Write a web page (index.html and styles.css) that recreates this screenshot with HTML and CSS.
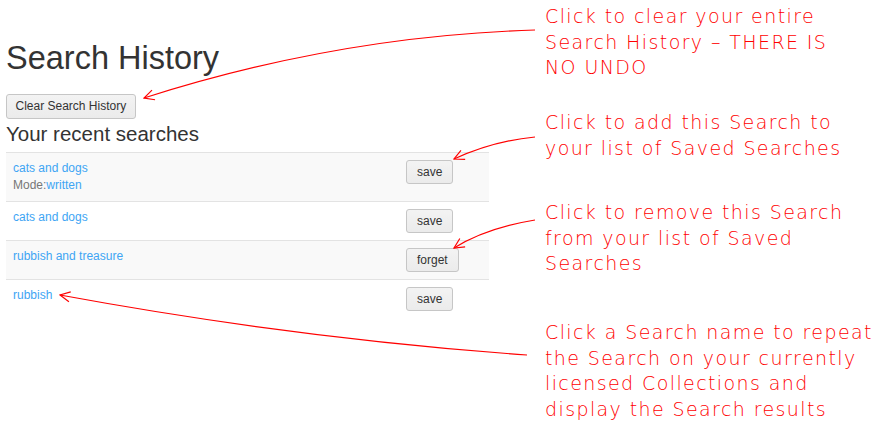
FILE: index.html
```html
<!DOCTYPE html>
<html>
<head>
<meta charset="utf-8">
<title>Search History</title>
<link rel="stylesheet" href="styles.css">
</head>
<body>
<div class="page">
  <main class="content">
    <h1 class="title">Search History</h1>
    <button class="btn btn-clear" type="button">Clear Search History</button>
    <h2 class="subtitle">Your recent searches</h2>
    <table class="history">
      <tbody>
        <tr class="striped">
          <td class="query">
            <a class="link" href="#">cats and dogs</a>
            <div class="mode">Mode:<a class="link" href="#">written</a></div>
          </td>
          <td class="action"><button class="btn" type="button">save</button></td>
        </tr>
        <tr>
          <td class="query"><a class="link" href="#">cats and dogs</a></td>
          <td class="action"><button class="btn" type="button">save</button></td>
        </tr>
        <tr class="striped">
          <td class="query"><a class="link" href="#">rubbish and treasure</a></td>
          <td class="action"><button class="btn" type="button">forget</button></td>
        </tr>
        <tr>
          <td class="query"><a class="link" href="#">rubbish</a></td>
          <td class="action"><button class="btn" type="button">save</button></td>
        </tr>
      </tbody>
    </table>
  </main>

  <p class="note note-clear">Click to clear your entire<br>Search History &ndash; THERE IS<br>NO UNDO</p>
  <p class="note note-save">Click to add this Search to<br>your list of Saved Searches</p>
  <p class="note note-forget">Click to remove this Search<br>from your list of Saved<br>Searches</p>
  <p class="note note-repeat">Click a Search name to repeat<br>the Search on your currently<br>licensed Collections and<br>display the Search results</p>

  <svg class="arrows" width="878" height="429" viewBox="0 0 878 429" aria-hidden="true">
    <defs>
      <marker id="head" viewBox="0 0 12 12" refX="11" refY="6" markerWidth="12" markerHeight="12" markerUnits="userSpaceOnUse" orient="auto">
        <path d="M1,1 L11,6 L1,11" fill="none" stroke="#f00" stroke-width="1.2"/>
      </marker>
    </defs>
    <path d="M535,30 Q338,36 144,98" marker-end="url(#head)"/>
    <path d="M535,137 Q493,141 454,159" marker-end="url(#head)"/>
    <path d="M535,220 Q486,228 454,248" marker-end="url(#head)"/>
    <path d="M527,355 Q293,338 60,295" marker-end="url(#head)"/>
  </svg>
</div>
</body>
</html>
```

FILE: styles.css
```css
* { box-sizing: border-box; }

html, body {
  margin: 0;
  padding: 0;
  background: #fff;
}

body {
  font-family: "Liberation Sans", Arial, sans-serif;
  color: #333;
  font-size: 12px;
}

.page {
  position: relative;
  width: 878px;
  height: 429px;
  overflow: hidden;
}

.content {
  padding: 41px 0 0 6px;
  width: 489px;
  display: flex;
  flex-direction: column;
  align-items: flex-start;
}

.title {
  margin: 0 0 18px;
  font-size: 32.5px;
  font-weight: normal;
  line-height: 35px;
  color: #333;
}

.subtitle {
  margin: 4px 0 7px;
  font-size: 20.5px;
  font-weight: normal;
  line-height: 22px;
  color: #333;
}

.btn {
  font-family: "Liberation Sans", Arial, sans-serif;
  font-size: 12px;
  line-height: 15px;
  height: 24px;
  padding: 4px 10px;
  color: #333;
  background: linear-gradient(#f3f3f3, #ebebeb);
  border: 1px solid #c6c6c6;
  border-radius: 3px;
  cursor: pointer;
}

.btn-clear {
  height: 25px;
  padding: 4px 8.5px;
}

.history {
  width: 483px;
  border-collapse: collapse;
}

.history td {
  padding: 7px;
  vertical-align: top;
  border-top: 1px solid #e3e3e3;
  line-height: 17px;
}

.history tr.striped td {
  background: #f9f9f9;
}

.history .query {
  width: 393px;
}

.link {
  color: #3ea5f4;
  text-decoration: none;
}

.mode {
  color: #777;
}

.note {
  position: absolute;
  left: 545px;
  margin: 0;
  font-family: "DejaVu Sans", sans-serif;
  font-size: 19px;
  font-weight: 200;
  letter-spacing: 1.4px;
  line-height: 25.6px;
  color: #f00;
  white-space: nowrap;
}

.note-clear { top: 4px; }
.note-save { top: 110px; }
.note-forget { top: 200px; }
.note-repeat { top: 320px; }

.arrows {
  position: absolute;
  left: 0;
  top: 0;
  pointer-events: none;
}

.arrows > path {
  fill: none;
  stroke: #f00;
  stroke-width: 1.2;
}
```
